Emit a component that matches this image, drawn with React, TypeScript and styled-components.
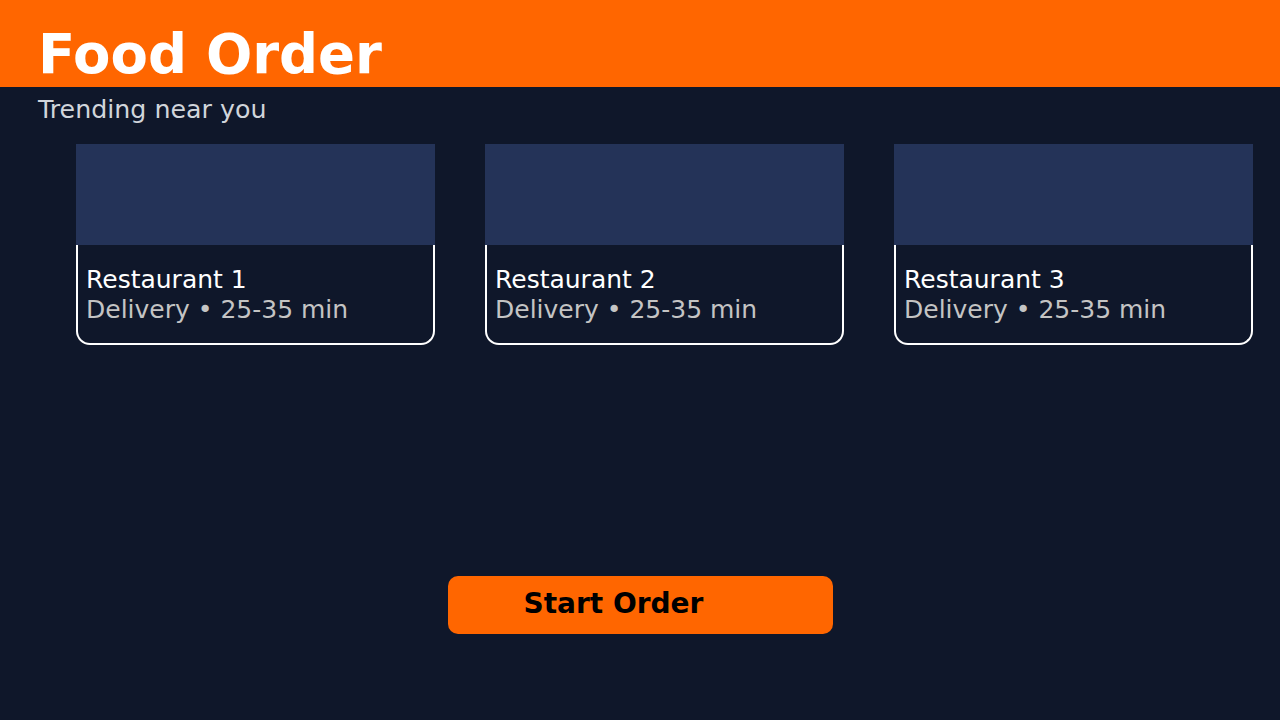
import React from "react";
import styled, { createGlobalStyle } from "styled-components";

const GlobalStyle = createGlobalStyle`
  html, body {
    margin: 0;
    padding: 0;
    background: #0f172a;
    font-family: "DejaVu Sans", "Liberation Sans", sans-serif;
  }
`;

const Page = styled.div`
  width: 1280px;
  height: 720px;
  background: #0f172a;
  display: flex;
  flex-direction: column;
  overflow: hidden;
`;

const Header = styled.header`
  height: 87px;
  background: #ff6600;
  display: flex;
  align-items: flex-end;
  padding: 0 38px;
  box-sizing: border-box;
`;

const Title = styled.h1`
  margin: 0 0 6px;
  font-size: 54.5px;
  font-weight: bold;
  color: #ffffff;
  line-height: 1;
`;

const Subtitle = styled.div`
  margin: 8px 0 0 38px;
  font-size: 25.3px;
  line-height: 30px;
  color: #d1d5db;
`;

const CardRow = styled.div`
  display: flex;
  gap: 50px;
  margin: 19px 0 0 76px;
`;

const Card = styled.div`
  width: 359px;
  display: flex;
  flex-direction: column;
`;

const CardImage = styled.div`
  height: 101px;
  background: #243358;
`;

const CardBody = styled.div`
  height: 100px;
  box-sizing: border-box;
  border: 2px solid #ffffff;
  border-top: none;
  border-radius: 0 0 14px 14px;
  padding: 20px 8px 0;
`;

const Name = styled.div`
  font-size: 25px;
  line-height: 30px;
  color: #ffffff;
`;

const Meta = styled.div`
  font-size: 25px;
  line-height: 30px;
  color: #c4c4c4;
`;

const Footer = styled.div`
  display: flex;
  justify-content: center;
  margin-top: 231px;
`;

const StartButton = styled.button`
  width: 385px;
  height: 58px;
  border: none;
  border-radius: 10px;
  background: #ff6600;
  color: #000000;
  font-family: "DejaVu Sans", "Liberation Sans", sans-serif;
  font-size: 28px;
  font-weight: bold;
  text-align: left;
  padding: 0 0 3px 76px;
  cursor: pointer;
`;

const restaurants = ["Restaurant 1", "Restaurant 2", "Restaurant 3"];

export default function App() {
  return (
    <Page>
      <GlobalStyle />
      <Header>
        <Title>Food Order</Title>
      </Header>
      <Subtitle>Trending near you</Subtitle>
      <CardRow>
        {restaurants.map((name) => (
          <Card key={name}>
            <CardImage />
            <CardBody>
              <Name>{name}</Name>
              <Meta>Delivery • 25-35 min</Meta>
            </CardBody>
          </Card>
        ))}
      </CardRow>
      <Footer>
        <StartButton>Start Order</StartButton>
      </Footer>
    </Page>
  );
}
